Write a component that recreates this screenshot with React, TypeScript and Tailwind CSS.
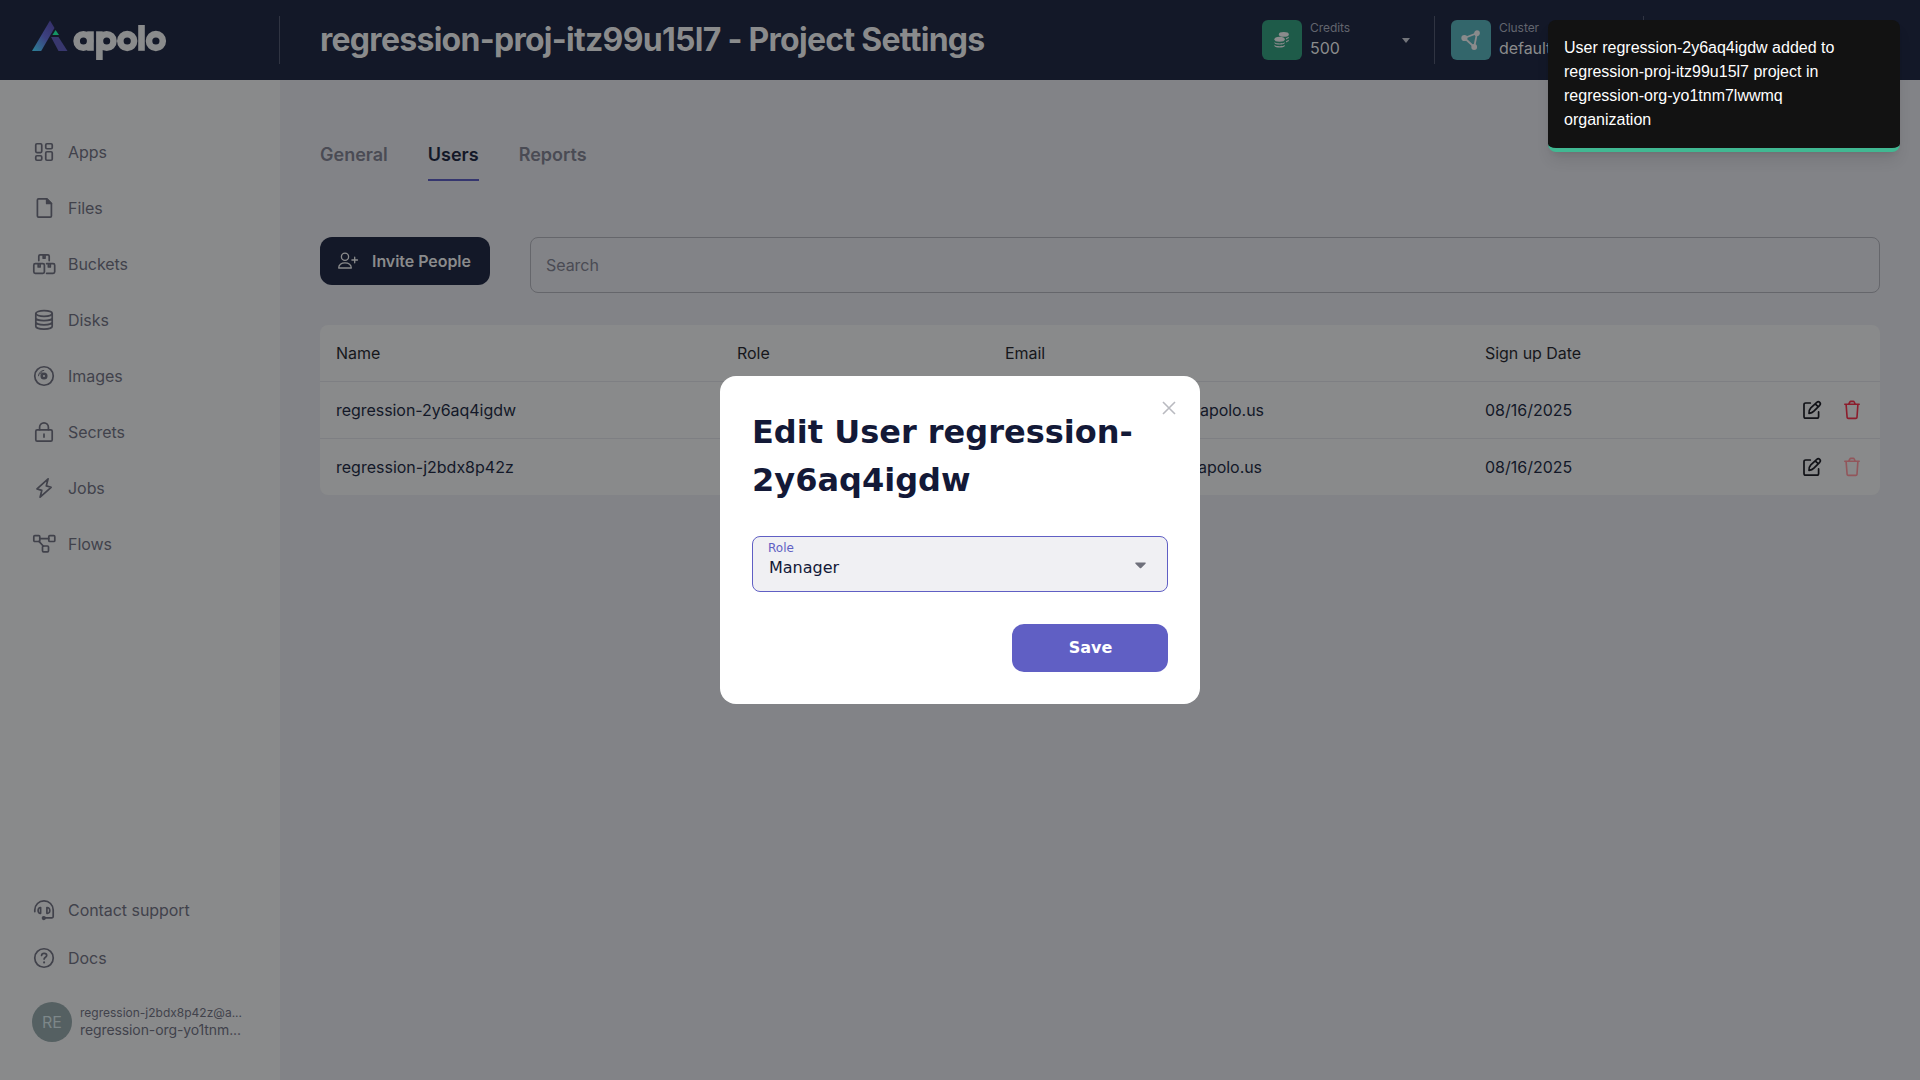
import React from "react";

type P = { children: React.ReactNode; w?: number; h?: number; box?: string; sw?: number; className?: string };
const Svg = ({ children, w = 24, h = 24, box, sw = 1.7, className = "" }: P) => (
  <svg width={w} height={h} viewBox={box ?? `0 0 ${w} ${h}`} fill="none" stroke="currentColor" strokeWidth={sw} strokeLinecap="round" strokeLinejoin="round" className={`shrink-0 ${className}`}>{children}</svg>
);

const icons: Record<string, React.ReactNode> = {
  Apps: (<><rect x="3.75" y="3.75" width="6" height="8.8" rx="1.2" /><rect x="13.75" y="3.75" width="6.5" height="5" rx="1.2" /><rect x="3.75" y="15.75" width="6" height="4.5" rx="1.2" /><rect x="13.75" y="11.75" width="6.5" height="8.5" rx="1.2" /></>),
  Files: (<><path d="M14.7 2.8H6.6c-.7 0-1.2.5-1.2 1.2v16c0 .7.5 1.2 1.2 1.2h11.6c.7 0 1.2-.5 1.2-1.2V7.5z" /><path d="M14.7 2.8v4.7h4.7z" fill="currentColor" /></>),
  Buckets: (<><path d="M6.8 8.6V4.2c0-.8.5-1.3 1.3-1.3h7.8c.8 0 1.3.5 1.3 1.3v4.4M11.2 3.4v2.8h1.8V3.4" /><rect x="1.8" y="11.7" width="10.6" height="9.6" rx="1.5" /><path d="M6.2 12v3h1.9v-3M14.6 11.7h6.5c.9 0 1.6.6 1.6 1.5v6.5c0 .9-.7 1.6-1.6 1.6h-6.5M16.4 12v3h1.9v-3" /></>),
  Disks: (<><ellipse cx="12" cy="5.5" rx="8.2" ry="2.8" /><path d="M3.8 5.5v12.8c0 1.6 3.6 2.9 8.2 2.9s8.2-1.3 8.2-2.9V5.5M3.8 9.9c0 1.5 3.6 2.7 8.2 2.7s8.2-1.2 8.2-2.7M3.8 14.1c0 1.6 3.6 2.8 8.2 2.8s8.2-1.2 8.2-2.8" /></>),
  Images: (<><circle cx="12" cy="12" r="9.25" /><circle cx="12" cy="12" r="2.3" strokeWidth="2.5" /><path d="M6.5 11.8A5.5 5.5 0 0 1 11.8 6.4" strokeWidth="1" /><path d="M8.3 10a4.2 4.2 0 0 1 1.8-1.7" strokeWidth="1" /></>),
  Secrets: (<><rect x="3.8" y="9.9" width="16.4" height="11.3" rx="1.4" /><path d="M7.6 9.7V7.2a4.4 4.4 0 0 1 8.8 0v2.5M12 14.2v2.9" /></>),
  Jobs: (<path d="M16.1 2.8 5 12.9l4.8 1.5-1.7 6.8 11-9.9-4.8-1.4z" />),
  Flows: (<><rect x="1.8" y="3.7" width="6" height="5.8" rx="1" /><rect x="16.8" y="3.7" width="6" height="5.8" rx="1" /><rect x="10.5" y="14" width="6" height="5.8" rx="1" /><path d="M7.8 6.6h9M7 9.4l4.4 4.8" /></>),
  "Contact support": (<><path d="M2.8 13.6V12A9.2 9.2 0 0 1 21.2 12v6.6c0 .8-.5 1.2-1.2 1.2h-7" /><path d="M8.6 9.6v5.7c-1.5.2-2.5-.8-2.5-2.8s1-3 2.5-2.9zM14.9 9.6v5.7c1.8.3 2.9-.8 2.9-2.8s-1.1-3-2.9-2.9z" /><circle cx="11.8" cy="20.1" r="1.3" fill="currentColor" /></>),
  Docs: (<><circle cx="12" cy="12" r="9.25" /><path d="M9.6 9.5c.1-1.3 1-2.1 2.5-2.1s2.6.8 2.6 2c0 1.8-2.6 1.8-2.6 3.7" /><path d="M12.1 16.4v.1" strokeWidth="2.1" /></>),
};

const NavItem = ({ name }: { name: string }) => (
  <a className="flex h-6 items-center gap-3"><Svg>{icons[name]}</Svg><span>{name}</span></a>
);

const Edit = () => (
  <Svg className="text-[#111217]"><path d="M10.3 5H5.7c-1 0-1.7.7-1.7 1.7v11.8c0 1 .7 1.7 1.7 1.7h11.2c1 0 1.7-.7 1.7-1.7v-4.6" /><path d="M9 15.4c0-2.9.5-4.3 1.8-5.6l6-5.4c.9-.8 2.1-.8 2.9 0 .8.8.8 2 0 2.9l-5.8 5.8c-1.3 1.3-2.3 1.9-4.9 2.3zM15.5 6.1l2.6 2.5" /></Svg>
);
const Trash = ({ faded }: { faded?: boolean }) => (
  <Svg sw={1.6} className={faded ? "text-[#92565b]" : "text-[#8c1d2c]"}><path d="M4.8 6.2h14.4M6.1 6.4l1 12.9c.1.8.5 1.1 1.2 1.1h7.5c.7 0 1.1-.3 1.2-1.1l.9-12.9M8.8 6l1.1-2c.2-.4.5-.6 1-.6h2.3c.5 0 .8.2 1 .6l1 2" /></Svg>
);

const users = [
  { name: "regression-2y6aq4igdw", email: "regression-2y6aq4igdw@apolo.us", pos: "w-[259px]" },
  { name: "regression-j2bdx8p42z", email: "regression-j2bdx8p42z@apolo.us", pos: "w-[257px]" },
];

export default function App() {
  return (
    <div className="relative flex h-[1080px] w-[1920px] flex-col overflow-hidden bg-[#828387] font-['Inter',sans-serif] text-base tracking-[-0.05px] text-[#41424b]">
      <header className="flex h-20 shrink-0 items-center bg-[#131828] text-[#8a8b8c]">
        <div className="flex h-12 w-[280px] items-center border-r border-[#303442] pl-8">
          <svg width="136" height="42" viewBox="0 0 136 42">
            <defs>
              <linearGradient id="blade" x1="0" y1="1" x2=".8" y2="0"><stop offset="0" stopColor="#2b8297" /><stop offset=".55" stopColor="#3c4180" /><stop offset="1" stopColor="#35306a" /></linearGradient>
            </defs>
            <path d="M18 1.5 22.5 9 9.2 32H0z" fill="url(#blade)" />
            <path d="M19 18h7.5L35.5 32h-9z" fill="#38376e" />
            <path d="M23.6 11 27 16h-6.6z" fill="#139565" />
            <g fill="none" stroke="#8a8b8c" strokeWidth="6.6">
              <circle cx="51.4" cy="22" r="6.8" /><path d="M58.5 12.3v19.5" />
              <circle cx="74.7" cy="22" r="6.8" /><path d="M67.4 12.3v28.7" />
              <circle cx="95.2" cy="22" r="6.9" /><path d="M109.5 6v25.8" /><circle cx="123.9" cy="22" r="6.9" />
            </g>
          </svg>
        </div>
        <h1 className="flex-1 pl-10 text-[32px] font-bold leading-10 tracking-[-0.72px]">regression-proj-itz99u15l7 - Project Settings</h1>
        <div className="flex h-12 w-[173px] items-center border-r border-[#303442]">
          <div className="flex size-10 items-center justify-center rounded-md bg-[#1e5b49]">
            <svg width="20" height="20" viewBox="0 0 20 20" fill="#8a8b8c"><ellipse cx="11.8" cy="4.4" rx="5" ry="2.4" /><ellipse cx="7.6" cy="9.3" rx="5.2" ry="2.5" /><path d="M2.4 12.2c2 1.6 8.4 1.6 10.4 0v.9c-1.4 2-9 2-10.4 0zM2.4 15c2 1.6 8.4 1.6 10.4 0v.9c-1.4 2-9 2-10.4 0zM14 8.2l2.8-1.4v1.1L14 9.5zM14 11.2l2.8-1.4v1.1L14 12.5z" /></svg>
          </div>
          <div className="ml-2 w-[90px]"><div className="text-xs leading-4 text-[#62656e]">Credits</div><div className="leading-6">500</div></div>
          <svg width="8" height="5" viewBox="0 0 8 5" className="ml-[2px] fill-[#73757b]"><path d="M0 0h8L4 5z" /></svg>
        </div>
        <div className="ml-4 flex h-12 w-[193px] items-center border-r border-[#303442]">
          <div className="flex size-10 items-center justify-center rounded-md bg-[#33666b]">
            <svg width="20" height="20" viewBox="0 0 20 20" fill="#8a8b8c" stroke="#8a8b8c" strokeWidth="1.8"><path d="M3.4 8 16 3.2 13.2 17z" fill="none" /><circle cx="3.4" cy="8" r="2.2" /><circle cx="16" cy="3.2" r="2" /><circle cx="13.2" cy="17" r="2" /></svg>
          </div>
          <div className="ml-2"><div className="text-xs leading-4 text-[#62656e]">Cluster</div><div className="leading-6">default</div></div>
        </div>
        <div className="w-[276px]" />
      </header>

      <div className="flex min-h-0 flex-1">
        <aside className="flex w-[280px] flex-col justify-between bg-[#898a8b] px-8 pb-[38px] pt-[60px]">
          <nav className="flex flex-col gap-8">
            {["Apps", "Files", "Buckets", "Disks", "Images", "Secrets", "Jobs", "Flows"].map((n) => <NavItem key={n} name={n} />)}
          </nav>
          <div className="flex flex-col">
            <div className="flex flex-col gap-6"><NavItem name="Contact support" /><NavItem name="Docs" /></div>
            <div className="mt-8 flex h-10 items-center gap-2">
              <div className="flex size-10 items-center justify-center rounded-full bg-[#556062] text-[#7d8789]">RE</div>
              <div className="whitespace-nowrap"><div className="text-xs leading-4 tracking-normal">regression-j2bdx8p42z@a...</div><div className="text-sm leading-[18px] tracking-[-0.1px]">regression-org-yo1tnm...</div></div>
            </div>
          </div>
        </aside>

        <main className="flex-1 px-10 pt-[60px]">
          <div className="flex gap-10 text-lg font-semibold leading-[29px] tracking-normal text-[#4a4b54]">
            <span className="h-[41px]">General</span>
            <span className="h-[41px] border-b-2 border-[#35366f] text-[#131828]">Users</span>
            <span className="h-[41px]">Reports</span>
          </div>
          <div className="mt-14 flex items-start gap-10">
            <button className="flex h-12 w-[170px] items-center rounded-xl bg-[#131828] pl-4 font-semibold text-[#8a8b8c]">
              <Svg sw={1.3}><circle cx="9" cy="7.7" r="3.6" /><path d="M2.7 19c0-3.2 2.5-5.1 6.3-5.1s6.3 1.9 6.3 5.1zM18.7 8.2v5.6M15.9 11h5.6" /></Svg>
              <span className="ml-3">Invite People</span>
            </button>
            <div className="flex h-14 flex-1 items-center rounded-lg border border-[#65666b] px-[15px] text-[#4a4b54]">Search</div>
          </div>
          <section className="mt-8 rounded-lg bg-[#898a8b] text-[#131828]">
            <div className="flex h-14 items-center pl-4 text-[#16171b]">
              <span className="w-[401px]">Name</span><span className="w-[268px]">Role</span><span className="w-[480px]">Email</span><span>Sign up Date</span>
            </div>
            {users.map((u, i) => (
              <div key={u.name} className="flex h-[57px] items-center border-t border-[#7e7f83] pl-4 pr-4">
                <span className={i === 1 ? "w-[401px] tracking-normal" : "w-[401px]"}>{u.name}</span><span className="w-[268px]">Manager</span>
                <span className="w-[480px]"><span className={`flex justify-end whitespace-nowrap ${u.pos}`}>{u.email}</span></span>
                <span className="flex-1 tracking-normal">08/16/2025</span>
                <span className="flex gap-4"><Edit /><Trash faded={i === 1} /></span>
              </div>
            ))}
          </section>
        </main>
      </div>

      <div role="dialog" className="absolute left-[720px] top-[376px] h-[328px] w-[480px] rounded-2xl bg-white p-8 font-['DejaVu_Sans',sans-serif] tracking-normal text-[#131937]">
        <svg width="14" height="14" viewBox="0 0 14 14" className="absolute right-[24.5px] top-[25px]" stroke="#b9bac0" strokeWidth="1.6" fill="none"><path d="M1 1l12 12M13 1 1 13" /></svg>
        <h2 className="text-[32px] font-bold leading-[48px]">Edit User regression-2y6aq4igdw</h2>
        <div className="mt-8 flex h-14 items-start justify-between rounded-lg border border-[#605fc4] bg-[#f0f0f3] pl-[15px] pr-[21.5px]">
          <div className="pt-[3px]"><div className="text-xs leading-4 text-[#605fc4]">Role</div><div className="pl-px leading-6">Manager</div></div>
          <svg width="11" height="7" viewBox="0 0 11 7" fill="#6f707b" className="mt-[24.5px]"><path d="M1 .5h9c.7 0 1 .7.5 1.2L6.2 6a1 1 0 0 1-1.4 0L.5 1.7C0 1.2.3.5 1 .5z" /></svg>
        </div>
        <div className="mt-8 flex justify-end"><button className="h-12 w-[156px] rounded-xl bg-[#605fc4] pl-px font-bold text-white">Save</button></div>
      </div>

      <div className="absolute left-[1548px] top-5 h-[132px] w-[352px] rounded-lg border-b-4 border-[#41b892] bg-[#121212] px-4 pt-4 font-['Liberation_Sans',sans-serif] leading-6 tracking-normal text-white shadow-lg">
        User regression-2y6aq4igdw added to<br />regression-proj-itz99u15l7 project in<br />regression-org-yo1tnm7lwwmq<br />organization
      </div>
    </div>
  );
}
